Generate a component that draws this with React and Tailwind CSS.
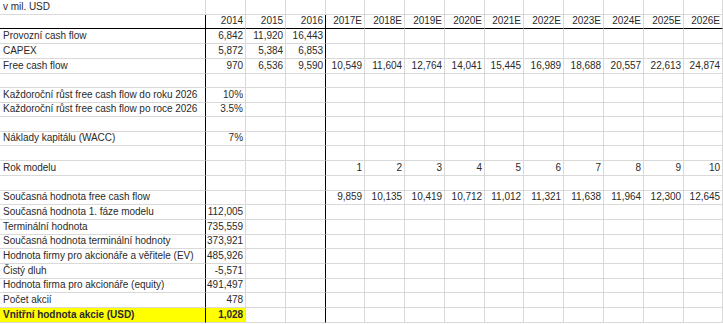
const widths = [
  "w-[206px]",
  "w-[40px]",
  "w-[40px]",
  "w-[40px]",
  "w-[39px]",
  "w-[40px]",
  "w-[40px]",
  "w-[40px]",
  "w-[39px]",
  "w-[40px]",
  "w-[40px]",
  "w-[40px]",
  "w-[40px]",
  "w-[39px]",
];

const heights = [
  "h-[15px]", "h-[14px]", "h-[15px]", "h-[15px]", "h-[15px]", "h-[14px]",
  "h-[15px]", "h-[14px]", "h-[15px]", "h-[14px]", "h-[15px]", "h-[15px]",
  "h-[15px]", "h-[14px]", "h-[15px]", "h-[15px]", "h-[14px]", "h-[15px]",
  "h-[15px]", "h-[14px]", "h-[15px]", "h-[15px]",
];

const e = "";
const rows = [
  ["v mil. USD"],
  [e, "2014", "2015", "2016", "2017E", "2018E", "2019E", "2020E", "2021E", "2022E", "2023E", "2024E", "2025E", "2026E"],
  ["Provozní cash flow", "6,842", "11,920", "16,443"],
  ["CAPEX", "5,872", "5,384", "6,853"],
  ["Free cash flow", "970", "6,536", "9,590", "10,549", "11,604", "12,764", "14,041", "15,445", "16,989", "18,688", "20,557", "22,613", "24,874"],
  [],
  ["Každoroční růst free cash flow do roku 2026", "10%"],
  ["Každoroční růst free cash flow po roce 2026", "3.5%"],
  [],
  ["Náklady kapitálu (WACC)", "7%"],
  [],
  ["Rok modelu", e, e, e, "1", "2", "3", "4", "5", "6", "7", "8", "9", "10"],
  [],
  ["Současná hodnota free cash flow", e, e, e, "9,859", "10,135", "10,419", "10,712", "11,012", "11,321", "11,638", "11,964", "12,300", "12,645"],
  ["Současná hodnota 1. fáze modelu", "112,005"],
  ["Terminální hodnota", "735,559"],
  ["Současná hodnota terminální hodnoty", "373,921"],
  ["Hodnota firmy pro akcionáře a věřitele (EV)", "485,926"],
  ["Čistý dluh", "-5,571"],
  ["Hodnota firma pro akcionáře (equity)", "491,497"],
  ["Počet akcií", "478"],
  ["Vnitřní hodnota akcie (USD)", "1,028"],
];

function Cell({ value, col, row }) {
  const first = row === 0;
  const header = row === 1;
  const last = row === rows.length - 1;
  const thickRight = !first && (col === 0 || col === 3);
  return (
    <div
      className={`${widths[col]} shrink-0 h-full flex items-end pb-[2px] overflow-visible whitespace-nowrap border-r border-b ${
        thickRight ? "border-r-black" : "border-r-[#d9d9d9]"
      } ${header ? "border-b-black" : "border-b-[#d9d9d9]"} ${
        col === 0 ? "justify-start pl-[3px]" : "justify-end pr-[2px]"
      } ${last && col < 2 ? "bg-[#ffff00] font-bold" : ""}`}
    >
      {value}
    </div>
  );
}

export default function App() {
  return (
    <div className="w-[723px] h-[324px] overflow-hidden bg-white text-[10px] tracking-[-0.03px] text-[#2a2a2a] font-['Liberation_Sans',Arial,sans-serif] leading-none">
      {rows.map((r, ri) => (
        <div key={ri} className={`flex ${heights[ri]}`}>
          {widths.map((_, ci) => (
            <Cell key={ci} value={r[ci] || ""} col={ci} row={ri} />
          ))}
        </div>
      ))}
    </div>
  );
}
